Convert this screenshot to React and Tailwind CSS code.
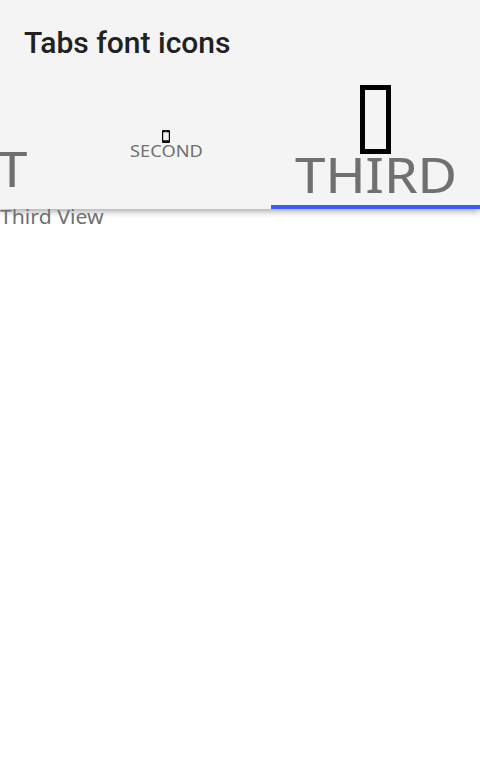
import React from "react";

function Tab({ className, children }) {
  return <div className={`flex shrink-0 flex-col items-center text-[#707070] ${className}`}>{children}</div>;
}

export default function App() {
  return (
    <div className="h-[762px] w-[480px] overflow-hidden bg-white font-['Noto_Sans',sans-serif]">
      <header className="relative h-[209px] bg-[#f4f4f4] shadow-[0_2px_7px_rgba(0,0,0,0.38)]">
        <h1 className="h-[84px] pl-6 pt-[23px] font-[Roboto,sans-serif] text-[30px] font-medium leading-10 text-[#212121]">Tabs font icons</h1>
        <nav className="flex h-[125px] w-[480px]">
          <Tab className="w-[61px] pt-[53px]">
            <span className="-ml-[3px] origin-left scale-x-[1.11] self-start text-[49px] leading-[62px] [-webkit-text-stroke:0.2px_#707070]">T</span>
          </Tab>
          <Tab className="w-[210px] pt-[46px]">
            <svg className="h-[13px] w-2" viewBox="0 0 8 13">
              <path fillRule="evenodd" fill="#000" d="M1.2 0h5.6Q8 0 8 1.2v10.6Q8 13 6.8 13H1.2Q0 13 0 11.8V1.2Q0 0 1.2 0ZM1.2 2.2v8h5.6v-8Z" />
              <path d="M3 1.2h2M3.5 11.6h1" stroke="#aaa" strokeWidth=".6" />
            </svg>
            <span className="scale-x-[1.12] text-[16.3px] leading-4">SECOND</span>
          </Tab>
          <Tab className="w-[209px]">
            <div className="mt-[0.5px] h-[69.5px] w-[30.5px] border-[5px] border-black" />
            <span className="-mt-[9px] ml-px scale-x-[1.105] text-[49px] leading-[58px] [-webkit-text-stroke:0.2px_#707070]">THIRD</span>
            <div className="mt-auto h-1 w-full bg-[#3d5afe]" />
          </Tab>
        </nav>
      </header>
      <main className="text-[19px] leading-4 text-[#707070]">
        <p className="relative origin-left scale-x-[1.115]">Third View</p>
      </main>
    </div>
  );
}
